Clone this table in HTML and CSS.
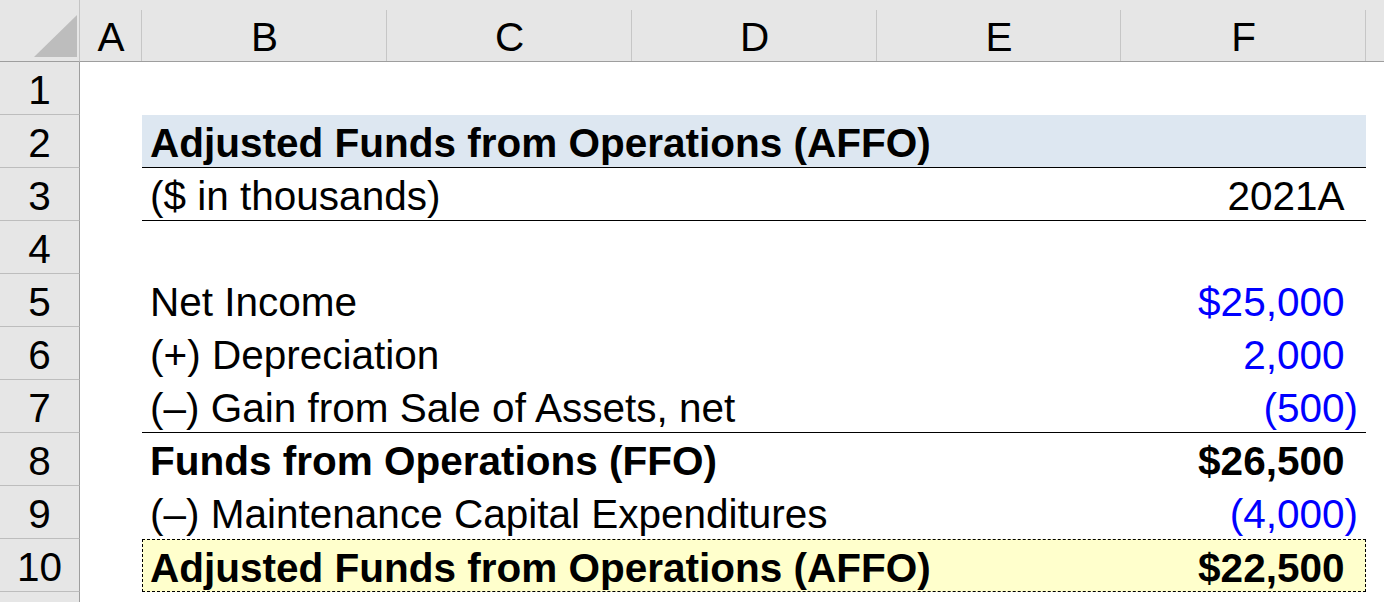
FILE: index.html
```html
<!DOCTYPE html>
<html>
<head>
<meta charset="utf-8">
<link rel="stylesheet" href="styles.css">
</head>
<body>
<div class="sheet">
  <div class="corner"><svg class="tri" width="43" height="42" viewBox="0 0 43 42"><polygon points="43,0 43,42 0,42" fill="#bdbdbd"/></svg></div>
  <div class="ch">A</div>
  <div class="ch">B</div>
  <div class="ch">C</div>
  <div class="ch">D</div>
  <div class="ch">E</div>
  <div class="ch">F</div>
  <div class="ch rest"></div>

  <div class="rh">1</div><div class="gap"></div><div class="cell"></div><div class="gap"></div>

  <div class="rh">2</div><div class="gap"></div>
  <div class="cell title"><span class="label">Adjusted Funds from Operations (AFFO)</span></div><div class="gap"></div>

  <div class="rh">3</div><div class="gap"></div>
  <div class="cell ruled"><span class="label">($ in thousands)</span><span class="val">2021A<span class="pad">)</span></span></div><div class="gap"></div>

  <div class="rh">4</div><div class="gap"></div><div class="cell"></div><div class="gap"></div>

  <div class="rh">5</div><div class="gap"></div>
  <div class="cell"><span class="label">Net Income</span><span class="val input">$25,000<span class="pad">)</span></span></div><div class="gap"></div>

  <div class="rh">6</div><div class="gap"></div>
  <div class="cell"><span class="label">(+) Depreciation</span><span class="val input">2,000<span class="pad">)</span></span></div><div class="gap"></div>

  <div class="rh">7</div><div class="gap"></div>
  <div class="cell ruled"><span class="label">(–) Gain from Sale of Assets, net</span><span class="val input">(500)</span></div><div class="gap"></div>

  <div class="rh">8</div><div class="gap"></div>
  <div class="cell bold"><span class="label">Funds from Operations (FFO)</span><span class="val">$26,500<span class="pad">)</span></span></div><div class="gap"></div>

  <div class="rh">9</div><div class="gap"></div>
  <div class="cell"><span class="label">(–) Maintenance Capital Expenditures</span><span class="val input">(4,000)</span></div><div class="gap"></div>

  <div class="rh">10</div><div class="gap"></div>
  <div class="cell bold total"><span class="label">Adjusted Funds from Operations (AFFO)</span><span class="val">$22,500<span class="pad">)</span></span></div><div class="gap"></div>

  <div class="rh"></div><div class="gap"></div><div class="cell"></div><div class="gap"></div>
</div>
</body>
</html>
```

FILE: styles.css
```css
* { box-sizing: border-box; }
html, body {
  margin: 0;
  padding: 0;
  background: #ffffff;
  overflow: hidden;
}
body {
  font-family: "Liberation Sans", Arial, sans-serif;
  font-size: 40.5px;
  color: #000;
}
.sheet {
  display: grid;
  grid-template-columns: 80px 62px 245px 245px 245px 244px 245px 1fr;
  grid-template-rows: 62px repeat(11, 53px);
  width: 1384px;
  height: 602px;
  overflow: hidden;
}
.corner {
  background: #e6e6e6;
  border-bottom: 1px solid #9e9e9e;
  border-right: 1px solid #c4c4c4;
  display: flex;
  justify-content: flex-end;
  align-items: flex-end;
  padding: 0 2px 4px 0;
}
.tri { display: block; }
.ch {
  background:
    linear-gradient(#c6c6c6, #c6c6c6) right bottom / 1px 51px no-repeat,
    #e6e6e6;
  border-bottom: 1px solid #9e9e9e;
  display: flex;
  align-items: flex-end;
  justify-content: center;
  line-height: 46px;
  padding-bottom: 1px;
}
.ch.rest { background: #e6e6e6; }
.rh {
  background: #e6e6e6;
  border-right: 1px solid #9e9e9e;
  border-bottom: 1px solid #bdbdbd;
  display: flex;
  align-items: flex-end;
  justify-content: center;
  line-height: 46px;
  padding-bottom: 1px;
}
.gap { background: #fff; }
.cell {
  grid-column: 3 / 8;
  display: flex;
  justify-content: space-between;
  align-items: flex-end;
  line-height: 46px;
  padding: 0 8px 1px 8px;
  border-bottom: 1px solid transparent;
}
.title {
  background: #dde7f1;
  font-weight: bold;
  border-bottom-color: #000;
}
.ruled { border-bottom-color: #000; }
.bold { font-weight: bold; }
.total {
  background: #ffffcc;
  border: 1px dashed #000;
  padding-left: 7px;
  padding-right: 7px;
  padding-bottom: 0;
}
.val { white-space: nowrap; }
.input { color: #0000ff; }
.pad { visibility: hidden; }
.label { white-space: nowrap; }
```
